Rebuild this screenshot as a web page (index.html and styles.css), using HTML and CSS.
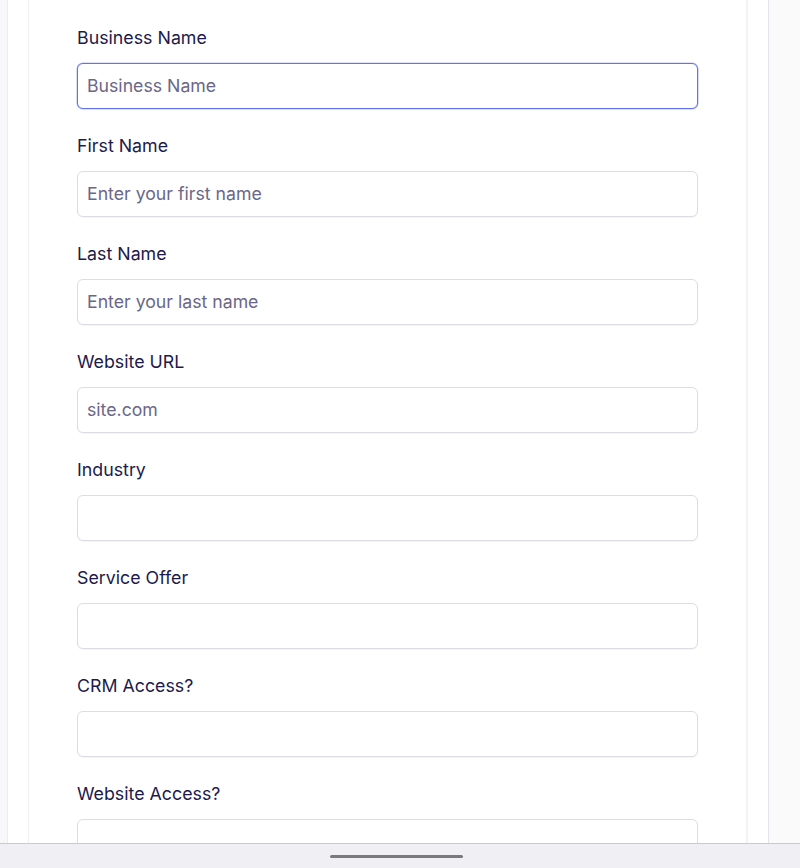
FILE: index.html
```html
<!DOCTYPE html>
<html lang="en">
<head>
<meta charset="utf-8">
<title>Business Form</title>
<link rel="stylesheet" href="styles.css">
</head>
<body>
<div class="screen">
  <div class="gutter-left"></div>
  <div class="panel">
    <div class="card">
      <form class="form">
        <div class="field">
          <label class="label" for="f1">Business Name</label>
          <input class="input input-focus" id="f1" type="text" placeholder="Business Name">
        </div>
        <div class="field">
          <label class="label" for="f2">First Name</label>
          <input class="input" id="f2" type="text" placeholder="Enter your first name">
        </div>
        <div class="field">
          <label class="label" for="f3">Last Name</label>
          <input class="input" id="f3" type="text" placeholder="Enter your last name">
        </div>
        <div class="field">
          <label class="label" for="f4">Website URL</label>
          <input class="input" id="f4" type="text" placeholder="site.com">
        </div>
        <div class="field">
          <label class="label" for="f5">Industry</label>
          <input class="input" id="f5" type="text">
        </div>
        <div class="field">
          <label class="label" for="f6">Service Offer</label>
          <input class="input" id="f6" type="text">
        </div>
        <div class="field">
          <label class="label" for="f7">CRM Access?</label>
          <input class="input" id="f7" type="text">
        </div>
        <div class="field">
          <label class="label" for="f8">Website Access?</label>
          <input class="input" id="f8" type="text">
        </div>
      </form>
    </div>
  </div>
  <div class="gutter-right"></div>
</div>
<div class="home-bar">
  <div class="home-indicator"></div>
</div>
</body>
</html>
```
FILE: styles.css
```css
* {
  box-sizing: border-box;
}

html, body {
  margin: 0;
  padding: 0;
}

body {
  width: 800px;
  height: 868px;
  overflow: hidden;
  background: #f8f8fa;
  font-family: Inter, "Noto Sans", "Liberation Sans", sans-serif;
}

.screen {
  display: flex;
  height: 843px;
  overflow: hidden;
}

.gutter-left {
  width: 8px;
  flex: none;
  background: #f8f8fa;
  border-right: 1px solid #ececf0;
}

.panel {
  width: 761px;
  flex: none;
  background: #ffffff;
  border-right: 1px solid #e4e3e8;
  padding: 0 20px;
}

.card {
  height: 100%;
  border-left: 1px solid #f1f0f4;
  border-right: 2px solid #f3f2f5;
  padding: 0 48px;
}

.gutter-right {
  flex: 1;
  background: #fafafb;
}

.form {
  display: flex;
  flex-direction: column;
  gap: 25px;
  padding-top: 26px;
}

.field {
  display: flex;
  flex-direction: column;
  gap: 13px;
}

.label {
  font-size: 17.8px;
  line-height: 24px;
  color: #1d1a4c;
}

.input {
  display: block;
  width: 100%;
  height: 46px;
  margin: 0;
  padding: 0 9px 2px;
  border: 1px solid #dddce4;
  border-radius: 6px;
  background: #ffffff;
  box-shadow: 0 1px 1px rgba(30, 27, 75, 0.04);
  font-family: inherit;
  font-size: 17.7px;
  color: #1d1a4c;
  outline: none;
}

.input::placeholder {
  color: #6a6789;
  opacity: 1;
}

.input-focus {
  border-color: #6272f2;
  box-shadow: 0 0 0 0.6px rgba(120, 135, 245, 0.5);
}

.home-bar {
  height: 25px;
  background: #f0eff3;
  border-top: 1px solid #cac9ce;
  padding-top: 11px;
}

.home-indicator {
  width: 133px;
  height: 3px;
  margin-left: 330px;
  border-radius: 2px;
  background: #79797c;
}
```
